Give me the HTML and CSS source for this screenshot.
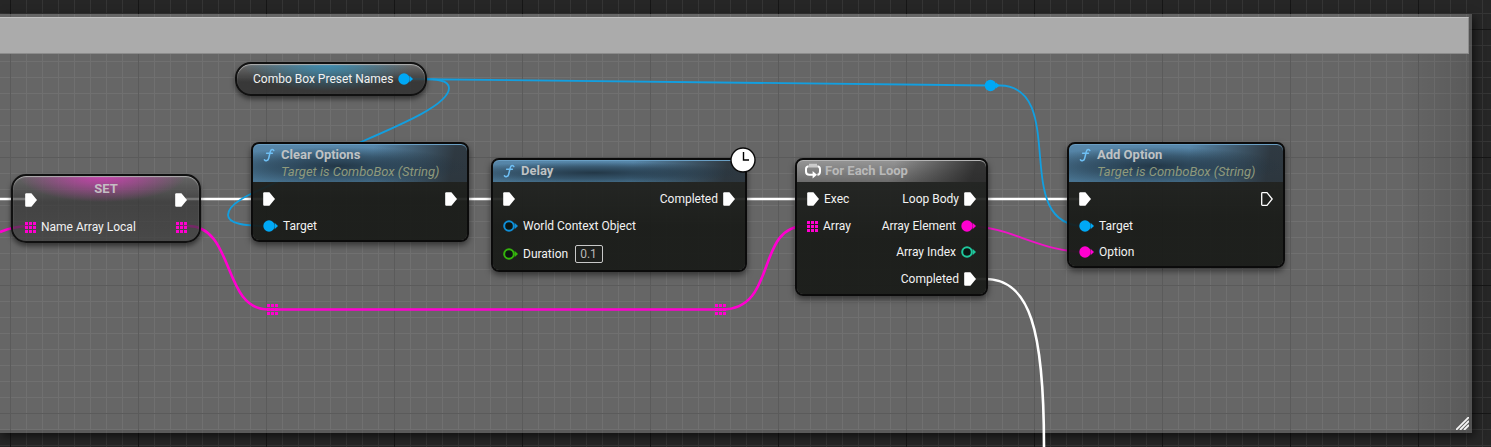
FILE: index.html
```html
<!DOCTYPE html>
<html lang="en">
<head>
<meta charset="utf-8">
<title>Blueprint Graph</title>
<link rel="stylesheet" href="styles.css">
</head>
<body>
<svg class="defs" width="0" height="0" aria-hidden="true">
  <symbol id="exec" viewBox="0 0 12 14"><path d="M1.2 .2H6.4L12 7L6.4 13.8H1.2Q.2 13.8 .2 12.8V1.2Q.2 .2 1.2 .2Z" fill="#fff"/></symbol>
  <symbol id="exec-open" viewBox="0 0 12 14"><path d="M1.4 .7H6L11.2 7L6 13.3H1.4Q.7 13.3 .7 12.6V1.4Q.7 .7 1.4 .7Z" fill="none" stroke="#fff" stroke-width="1.3"/></symbol>
  <symbol id="dot" viewBox="0 0 15 12"><circle cx="6" cy="6" r="5.7" fill="currentColor"/><path d="M11.6 2.8L15 6L11.6 9.2Z" fill="currentColor"/></symbol>
  <symbol id="ring" viewBox="0 0 15 12"><circle cx="6" cy="6" r="4.8" fill="#0b1512" stroke="currentColor" stroke-width="2"/><path d="M11.6 2.8L15 6L11.6 9.2Z" fill="currentColor"/></symbol>
  <symbol id="array" viewBox="0 0 11 11"><path d="M0 0h3v3H0zM4 0h3v3H4zM8 0h3v3H8zM0 4h3v3H0zM4 4h3v3H4zM8 4h3v3H8zM0 8h3v3H0zM4 8h3v3H4zM8 8h3v3H8z" fill="currentColor"/></symbol>
  <symbol id="func" viewBox="0 0 12 14"><path d="M10.8 2.6C10.2 1 8 .8 7.3 3.6L5.7 10.2C5.1 12.8 2.6 13.4 1.4 11.8M3.6 5.2H9.4" fill="none" stroke="#6fc0f5" stroke-width="1.5" stroke-linecap="round"/></symbol>
  <symbol id="loop" viewBox="0 0 16 16"><path d="M3.6 3.2C1.8 3.4 1 4.2 1 6V8.4C1 10.8 2.2 11.8 4.4 11.8H9M12.4 3.2C14.2 3.4 15 4.2 15 6V8.4C15 10.6 14.2 11.6 12.4 11.8" fill="none" stroke="#fff" stroke-width="2"/><path d="M7.6 8L12 11.8L7.6 15.6Z" fill="#fff"/><path d="M5 .8V4.6M7 .8V4.6M9 .8V4.6M11 .8V4.6" stroke="#fff" stroke-width="1.1"/></symbol>
</svg>

<main class="graph">
  <section class="comment" aria-label="Comment">
    <div class="comment-title"></div>
    <svg class="grip" width="13" height="13" viewBox="0 0 13 13"><path d="M0 13L13 0M4 13L13 4M8 13L13 8" stroke="#f4f4f4" stroke-width="1.8"/></svg>
  </section>

  <svg class="wires" aria-hidden="true">
    <g fill="none" stroke="#fff" stroke-width="2.6">
      <path d="M0 199H30M181 199H268M451 199H508M729 199H812M970 199H1084"/>
      <path d="M970 279H985C1030 279 1044 330 1044 447"/>
    </g>
    <g fill="none" stroke="#ff00d0" stroke-width="2.6">
      <path d="M0 232C10 228 20 226 30 226"/>
      <path d="M181 226H188C235 226 222 309.5 268 309.5H722C778 309.5 755 226 805 226H812"/>
      <path d="M967 226C1010 226 1040 252 1085 252" stroke="#ee14c6" stroke-width="1.8"/>
    </g>
    <g fill="none" stroke="#129fe0" stroke-width="1.8">
      <path d="M404 79L990 85.5H1000C1034 86 1037 120 1040 156S1046 226 1085 226"/>
      <path d="M404 79H420C436 79 449 80 449 88C449 104 405 123 361 142C325 157 300 171 277 182C250 194 228 203 228 215C228 224 245 226 268 226"/>
    </g>
    <g fill="#ff00d0">
      <path d="M267 304h3v3h-3zM271 304h3v3h-3zM275 304h3v3h-3zM267 308h3v3h-3zM271 308h3v3h-3zM275 308h3v3h-3zM267 312h3v3h-3zM271 312h3v3h-3zM275 312h3v3h-3z"/>
      <path d="M715 304h3v3h-3zM719 304h3v3h-3zM723 304h3v3h-3zM715 308h3v3h-3zM719 308h3v3h-3zM723 308h3v3h-3zM715 312h3v3h-3zM719 312h3v3h-3zM723 312h3v3h-3z"/>
    </g>
    <path d="M996 82.5L999.5 85.5L996 88.5Z" fill="#00a8f5"/><circle cx="990.5" cy="85.5" r="5.7" fill="#00a8f5"/>
  </svg>

  <article class="node getter at-names">
    <span>Combo Box Preset Names</span><svg class="pin blue"><use href="#dot"/></svg>
  </article>

  <article class="node setter at-set">
    <h2>SET</h2>
    <div class="body">
      <div class="col">
        <div class="row exec"><svg class="flow"><use href="#exec"/></svg></div>
        <div class="row"><svg class="grid pink"><use href="#array"/></svg>Name Array Local</div>
      </div>
      <div class="col out">
        <div class="row exec"><svg class="flow"><use href="#exec"/></svg></div>
        <div class="row"><svg class="grid pink"><use href="#array"/></svg></div>
      </div>
    </div>
  </article>

  <article class="node at-clear">
    <header class="head"><svg class="fn"><use href="#func"/></svg><div><h2>Clear Options</h2><p>Target is ComboBox (String)</p></div></header>
    <div class="body">
      <div class="col">
        <div class="row exec"><svg class="flow"><use href="#exec"/></svg></div>
        <div class="row"><svg class="pin blue"><use href="#dot"/></svg>Target</div>
      </div>
      <div class="col out">
        <div class="row exec"><svg class="flow"><use href="#exec"/></svg></div>
      </div>
    </div>
  </article>

  <article class="node at-delay">
    <header class="head"><svg class="fn"><use href="#func"/></svg><h2>Delay</h2></header>
    <svg class="clock" viewBox="0 0 26 26"><circle cx="13" cy="13" r="12" fill="#fff" stroke="#0a0a0a" stroke-width="1.4"/><path d="M13.5 5V13H19" fill="none" stroke="#000" stroke-width="1.4"/></svg>
    <div class="body">
      <div class="col">
        <div class="row exec"><svg class="flow"><use href="#exec"/></svg></div>
        <div class="row"><svg class="pin azure"><use href="#ring"/></svg>World Context Object</div>
        <div class="row field"><svg class="pin green"><use href="#ring"/></svg><label for="duration">Duration</label><input id="duration" type="text" value="0.1"></div>
      </div>
      <div class="col out">
        <div class="row exec">Completed<svg class="flow"><use href="#exec"/></svg></div>
      </div>
    </div>
  </article>

  <article class="node at-loop">
    <header class="head macro"><svg class="cycle"><use href="#loop"/></svg><h2>For Each Loop</h2></header>
    <div class="body">
      <div class="col">
        <div class="row exec"><svg class="flow"><use href="#exec"/></svg>Exec</div>
        <div class="row"><svg class="grid pink"><use href="#array"/></svg>Array</div>
      </div>
      <div class="col out">
        <div class="row exec">Loop Body<svg class="flow"><use href="#exec"/></svg></div>
        <div class="row">Array Element<svg class="pin pink"><use href="#dot"/></svg></div>
        <div class="row">Array Index<svg class="pin teal"><use href="#ring"/></svg></div>
        <div class="row exec">Completed<svg class="flow"><use href="#exec"/></svg></div>
      </div>
    </div>
  </article>

  <article class="node at-add">
    <header class="head"><svg class="fn"><use href="#func"/></svg><div><h2>Add Option</h2><p>Target is ComboBox (String)</p></div></header>
    <div class="body">
      <div class="col">
        <div class="row exec"><svg class="flow"><use href="#exec"/></svg></div>
        <div class="row"><svg class="pin blue"><use href="#dot"/></svg>Target</div>
        <div class="row"><svg class="pin pink"><use href="#dot"/></svg>Option</div>
      </div>
      <div class="col out">
        <div class="row exec"><svg class="flow"><use href="#exec-open"/></svg></div>
      </div>
    </div>
  </article>
</main>
</body>
</html>
```

FILE: styles.css
```css
* { box-sizing: border-box; }

body {
  margin: 0;
  background: #262626;
  color: #f2f2f2;
  font: 12px/16px Roboto, "Liberation Sans", sans-serif;
}

h2, p { margin: 0; }
svg { display: block; flex: none; }
.defs { position: absolute; }

/* Canvas with a 16px grid and a heavier line every 128px */
.graph {
  position: relative;
  height: 100vh;
  overflow: hidden;
  background:
    linear-gradient(90deg, #161616 1px, transparent 1px) 10px 0 / 128px 128px,
    linear-gradient(#161616 1px, transparent 1px) 0 29px / 128px 128px,
    linear-gradient(90deg, #353535 1px, transparent 1px) 10px 0 / 16px 16px,
    linear-gradient(#353535 1px, transparent 1px) 0 13px / 16px 16px,
    #262626;
}

.comment {
  position: absolute;
  top: 14px;
  left: 0;
  right: 19px;
  bottom: 14px;
  padding-top: 3px;
  border: solid rgba(70, 70, 70, .4);
  border-width: 0 3px 3px 0;
  background: linear-gradient(90deg, transparent calc(100% - 70px), rgba(0, 0, 0, .12)) border-box, rgba(235, 235, 235, .33);
  box-shadow: 2px 3px 9px rgba(0, 0, 0, .6);
}

.comment-title {
  height: 37px;
  border: solid #c2c2c2;
  border-width: 1px 1px 1px 0;
  border-right-color: #8c8c8c;
  border-bottom-color: #8c8c8c;
  background: #ababab;
}

.grip { position: absolute; right: 0; bottom: 0; }
.wires { position: absolute; inset: 0; width: 100%; height: 100%; }

.node {
  position: absolute;
  border: 2px solid #0b0b0b;
  border-radius: 8px;
  background: linear-gradient(rgba(34, 36, 34, .93), rgba(24, 26, 23, .93) 60%);
  background-clip: padding-box;
  box-shadow: 0 3px 6px rgba(0, 0, 0, .5);
  white-space: nowrap;
}

.at-names { left: 235px; top: 62px; width: 192px; }
.at-set { left: 11px; top: 174px; width: 190px; }
.at-clear { left: 251px; top: 142px; width: 218px; }
.at-delay { left: 491px; top: 158px; width: 256px; }
.at-loop { left: 795px; top: 158px; width: 193px; }
.at-add { left: 1067px; top: 142px; width: 218px; }

.head {
  display: flex;
  gap: 6px;
  padding: 2px 10px;
  border-radius: 6px 6px 0 0;
  background:
    radial-gradient(ellipse 60% 50% at 40% 58%, rgba(30, 48, 62, .9), rgba(30, 48, 62, .5) 55%, transparent),
    linear-gradient(100deg, transparent 55%, rgba(40, 44, 48, .85) 92%),
    linear-gradient(#5888ab, #487390);
  box-shadow: inset 0 1px #6a9fc4;
}

.head.macro {
  padding-left: 8px;
  gap: 4px;
  background:
    linear-gradient(110deg, transparent 50%, rgba(36, 36, 36, .85) 92%),
    linear-gradient(#969696, #6c6c6c);
  box-shadow: inset 0 1px #b5b5b5;
}

h2 { color: #bfc2c4; font-size: 13px; line-height: 18px; font-weight: 700; }
.macro h2 { color: #b9b9b9; }
.head p { color: #8f9a7c; font-size: 13px; font-style: italic; line-height: 16px; }

.body {
  display: flex;
  justify-content: space-between;
  padding: 3px 10px 1px;
}

.row { display: flex; align-items: center; gap: 5px; height: 26px; }
.row.exec { height: 28px; }
.row.field { height: 30px; }
.out .row { justify-content: flex-end; }

.flow { width: 12px; height: 14px; }
.pin { width: 15px; height: 12px; }
.grid { width: 11px; height: 11px; }
.fn { width: 12px; height: 14px; margin-top: 2px; }
.cycle { width: 16px; height: 16px; margin-top: 1px; }

.blue { color: #00a8f5; }
.azure { color: #0f8fd8; }
.pink { color: #ff00d0; }
.green { color: #35b50c; }
.teal { color: #1fc79c; }

.field input {
  width: 28px;
  height: 18px;
  margin-left: 2px;
  padding: 0 4px;
  border: 1px solid #c8c8c8;
  border-radius: 2px;
  background: transparent;
  color: #b8b8b8;
  font: inherit;
}

.clock { position: absolute; right: -11px; top: -13px; width: 26px; height: 26px; }

.getter, .setter {
  border-color: #111;
  box-shadow: inset 0 1px 1px #b0b0b0, 0 3px 5px rgba(0, 0, 0, .5);
}

.getter {
  display: flex;
  align-items: center;
  justify-content: space-between;
  height: 34px;
  padding: 0 12px 0 16px;
  border-radius: 16px;
  background:
    radial-gradient(ellipse 45% 90% at 48% 0, rgba(50, 150, 195, .8), transparent),
    linear-gradient(rgba(110, 110, 110, .85), rgba(48, 48, 48, .85) 60%);
}

.setter {
  border-radius: 15px;
  background:
    radial-gradient(ellipse 45% 40% at 48% 0, rgba(215, 60, 185, .85), transparent),
    linear-gradient(rgba(100, 100, 100, .7), rgba(52, 52, 52, .7) 40%, rgba(60, 60, 60, .7));
}

.setter h2 { height: 10px; padding-top: 4px; color: #c4bec3; text-align: center; }
.setter .body { padding: 0 12px 1px; }
```
